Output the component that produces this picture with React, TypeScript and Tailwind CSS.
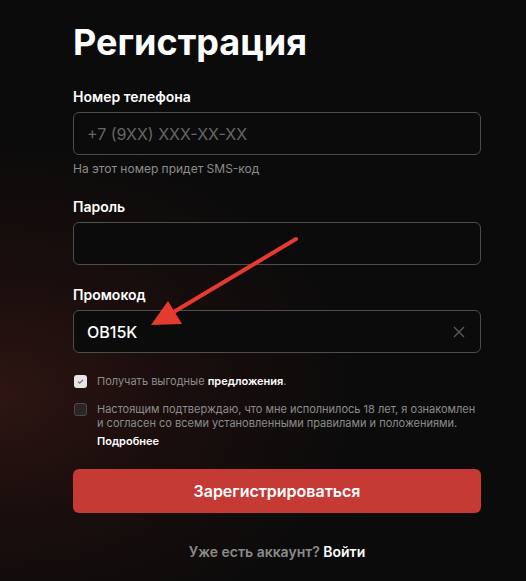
import React from "react";

function Field({ label, children, className = "" }: { label: string; children?: React.ReactNode; className?: string }) {
  return (
    <div className={className}>
      <div className="text-sm leading-5 font-semibold text-white">{label}</div>
      <div className="mt-[5px] flex h-[43px] items-center rounded-[6px] border border-[#4d4d4d] bg-[#0b0b0b] px-[13px]">
        {children}
      </div>
    </div>
  );
}

export default function App() {
  return (
    <div className="relative min-h-[581px] w-full overflow-hidden bg-[#0b0b0b] bg-[radial-gradient(ellipse_70%_45%_at_0%_68%,#2d1512_0%,#1a0e0d_45%,#0b0b0b_100%)] font-['Inter','Noto_Sans',sans-serif]">
      <div className="pl-[73px] pr-[45px] pt-[24px]">
        <h1 className="text-[36px] font-bold leading-none text-white">Регистрация</h1>

        <Field label="Номер телефона" className="mt-[27px]">
          <span className="text-base text-[#666666]">+7 (9XX) XXX-XX-XX</span>
        </Field>
        <div className="mt-[6px] text-xs leading-4 text-[#8c8c8c]">На этот номер придет SMS-код</div>

        <Field label="Пароль" className="mt-5" />

        <Field label="Промокод" className="mt-5">
          <span className="flex-1 text-base font-medium text-white">OB15K</span>
          <svg width="12" height="12" viewBox="0 0 12 12" className="mr-[2px]">
            <path d="M1 1L11 11M11 1L1 11" stroke="#5a5a5a" strokeWidth="1.4" />
          </svg>
        </Field>

        <div className="mt-[21px] flex items-start gap-[10px] pl-[1px]">
          <div className="mt-[1px] flex h-[13px] w-[13px] shrink-0 items-center justify-center rounded-[3px] bg-[#e6e6e6]">
            <svg width="9" height="9" viewBox="0 0 9 9">
              <path d="M2 4.6L3.7 6.2L7 2.8" stroke="#6f6f6f" strokeWidth="1.2" fill="none" />
            </svg>
          </div>
          <div className="text-[11px] leading-[14px] text-[#8c8c8c]">
            Получать выгодные <span className="font-semibold text-white">предложения</span>.
          </div>
        </div>

        <div className="mt-[14px] flex items-start gap-[10px] pl-[1px]">
          <div className="mt-[1px] h-[13px] w-[13px] shrink-0 rounded-[3px] border border-[#4a4a4a] bg-[#2a2626]" />
          <div>
            <div className="text-[11px] leading-[14.4px] text-[#8c8c8c]">
              Настоящим подтверждаю, что мне исполнилось 18 лет, я ознакомлен и согласен со всеми установленными правилами и положениями.
            </div>
            <div className="mt-[3px] text-[11px] leading-[14px] font-semibold text-white">Подробнее</div>
          </div>
        </div>

        <button className="mt-[21px] flex h-[44px] w-full items-center justify-center rounded-[6px] bg-[#c53a35] text-base font-semibold text-white">
          Зарегистрироваться
        </button>

        <div className="mt-[29px] text-center text-sm leading-5 font-semibold text-[#8a8a8a]">
          Уже есть аккаунт? <span className="text-white">Войти</span>
        </div>
      </div>

      <svg className="pointer-events-none absolute left-0 top-0" width="526" height="581" viewBox="0 0 526 581">
        <line x1="296" y1="239" x2="172" y2="313" stroke="#e53a30" strokeWidth="4" strokeLinecap="round" />
        <polygon points="151,325 168,301 182,324" fill="#e53a30" />
      </svg>
    </div>
  );
}
